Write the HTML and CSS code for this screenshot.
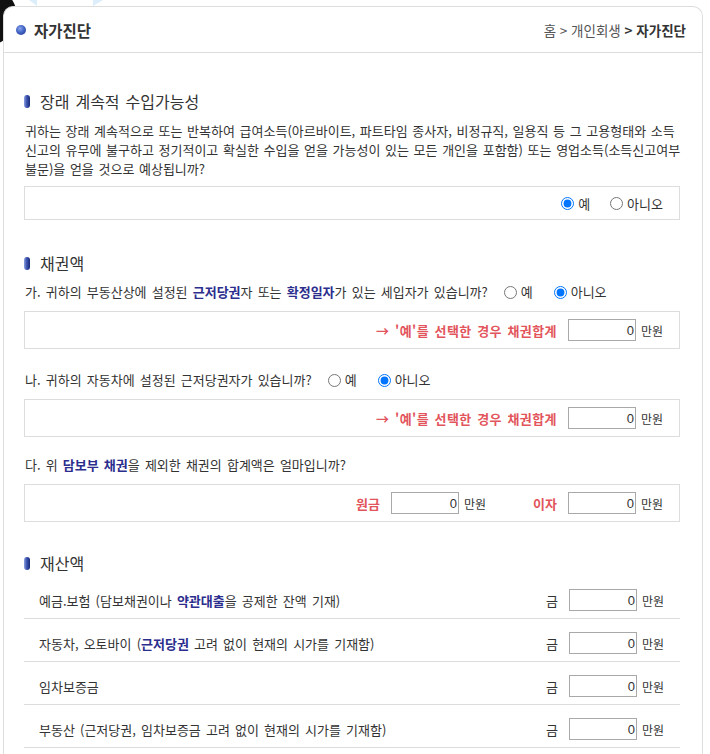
FILE: index.html
```html
<!DOCTYPE html>
<html lang="ko">
<head>
<meta charset="utf-8">
<title>자가진단</title>
<link rel="stylesheet" href="styles.css">
</head>
<body>
<div class="page">
  <div class="deco-blob"></div>
  <div class="deco-tab tab-a"></div>
  <div class="deco-tab tab-b"></div>
  <div class="panel">
    <div class="panel-head">
      <h2 class="title"><span class="ball"></span>자가진단</h2>
      <div class="crumb">홈 &gt; 개인회생 <b>&gt; 자가진단</b></div>
    </div>
    <div class="panel-body">
      <section class="sec sec-first">
        <h3 class="sec-title"><span class="pill"></span>장래 계속적 수입가능성</h3>
        <p class="desc">귀하는 장래 계속적으로 또는 반복하여 급여소득(아르바이트, 파트타임 종사자, 비정규직, 일용직 등 그 고용형태와 소득<br>신고의 유무에 불구하고 정기적이고 확실한 수입을 얻을 가능성이 있는 모든 개인을 포함함) 또는 영업소득(소득신고여부<br>불문)을 얻을 것으로 예상됩니까?</p>
        <div class="box box-radio">
          <label class="radio"><input type="radio" name="q1" checked>예</label>
          <label class="radio"><input type="radio" name="q1">아니오</label>
        </div>
      </section>

      <section class="sec">
        <h3 class="sec-title"><span class="pill"></span>채권액</h3>
        <div class="question">
          <span>가. 귀하의 부동산상에 설정된 <b class="em">근저당권</b>자 또는 <b class="em">확정일자</b>가 있는 세입자가 있습니까?</span>
          <span class="radios">
            <label class="radio"><input type="radio" name="q2">예</label>
            <label class="radio"><input type="radio" name="q2" checked>아니오</label>
          </span>
        </div>
        <div class="box box-amount">
          <span class="red">→ '예'를 선택한 경우 채권합계</span>
          <span class="amount"><input class="num" type="text" value="0"><span class="unit">만원</span></span>
        </div>

        <div class="question">
          <span>나. 귀하의 자동차에 설정된 근저당권자가 있습니까?</span>
          <span class="radios">
            <label class="radio"><input type="radio" name="q3">예</label>
            <label class="radio"><input type="radio" name="q3" checked>아니오</label>
          </span>
        </div>
        <div class="box box-amount">
          <span class="red">→ '예'를 선택한 경우 채권합계</span>
          <span class="amount"><input class="num" type="text" value="0"><span class="unit">만원</span></span>
        </div>

        <div class="question question-plain">
          <span>다. 위 <b class="em">담보부 채권</b>을 제외한 채권의 합계액은 얼마입니까?</span>
        </div>
        <div class="box box-amount">
          <span class="red red-short">원금</span>
          <span class="amount"><input class="num" type="text" value="0"><span class="unit">만원</span></span>
          <span class="red red-short red-gap">이자</span>
          <span class="amount"><input class="num" type="text" value="0"><span class="unit">만원</span></span>
        </div>
      </section>

      <section class="sec sec-last">
        <h3 class="sec-title"><span class="pill"></span>재산액</h3>
        <ul class="rows">
          <li class="row">
            <span class="row-label">예금.보험 (담보채권이나 <b class="em">약관대출</b>을 공제한 잔액 기재)</span>
            <span class="row-val"><span class="geum">금</span><input class="num" type="text" value="0"><span class="unit">만원</span></span>
          </li>
          <li class="row">
            <span class="row-label">자동차, 오토바이 (<b class="em">근저당권</b> 고려 없이 현재의 시가를 기재함)</span>
            <span class="row-val"><span class="geum">금</span><input class="num" type="text" value="0"><span class="unit">만원</span></span>
          </li>
          <li class="row">
            <span class="row-label">임차보증금</span>
            <span class="row-val"><span class="geum">금</span><input class="num" type="text" value="0"><span class="unit">만원</span></span>
          </li>
          <li class="row">
            <span class="row-label">부동산 (근저당권, 임차보증금 고려 없이 현재의 시가를 기재함)</span>
            <span class="row-val"><span class="geum">금</span><input class="num" type="text" value="0"><span class="unit">만원</span></span>
          </li>
        </ul>
      </section>
    </div>
  </div>
</div>
</body>
</html>
```
FILE: styles.css
```css
* { box-sizing: border-box; }
html, body { margin: 0; padding: 0; background: #fff; }
body {
  font-family: "Noto Sans CJK KR", "Noto Sans", sans-serif;
  font-size: 13px;
  color: #333;
  word-spacing: 1.5px;
}
.page {
  position: relative;
  padding: 6px 0 0 3px;
  width: 710px;
  height: 754px;
  overflow: hidden;
}
.deco-blob {
  position: absolute;
  left: -41px;
  top: -13px;
  width: 58px;
  height: 58px;
  border-radius: 50%;
  background: #111;
}
.deco-tab {
  position: absolute;
  top: 0;
  height: 6px;
  background: #dceefa;
}
.tab-a { left: 29px; width: 8px; clip-path: polygon(0 0, 100% 0, 100% 100%); }
.tab-b { left: 93px; width: 10px; clip-path: polygon(0 0, 100% 0, 0 100%); }

.panel {
  position: relative;
  width: 700px;
  border: 1px solid #ddd;
  border-bottom: 0;
  border-radius: 10px 10px 0 0;
  background: #fff;
  min-height: 760px;
}
.panel-head {
  height: 46px;
  border-bottom: 1px solid #ddd;
  display: flex;
  align-items: center;
  justify-content: space-between;
  padding: 0 16px 0 12px;
}
.title {
  margin: 0;
  display: flex;
  align-items: center;
  font-size: 15.5px;
  font-weight: bold;
  color: #333;
  line-height: 20px;
  word-spacing: 0;
}
.ball {
  width: 10px;
  height: 10px;
  border-radius: 50%;
  margin-right: 8px;
  background: radial-gradient(circle at 40% 35%, #8aa6ee 0%, #4466c4 45%, #1f3587 100%);
}
.crumb {
  font-size: 13.5px;
  color: #555;
  word-spacing: 0;
}
.crumb b { color: #333; }

.panel-body {
  padding: 0 22px 0 20px;
}
.sec { margin-top: 33px; }
.sec-first { margin-top: 38px; }
.sec-last { margin-top: 31px; }
.sec-title {
  margin: 0;
  display: flex;
  align-items: center;
  font-size: 16px;
  font-weight: normal;
  line-height: 20px;
  color: #333;
}
.pill {
  width: 6px;
  height: 13px;
  border-radius: 3px;
  margin-right: 10px;
  background: linear-gradient(90deg, #8ea2e0 0%, #3d55b0 45%, #182a78 100%);
}
.desc {
  margin: 10px 0 0 1px;
  line-height: 19px;
  white-space: nowrap;
  word-spacing: 1px;
}
.box {
  border: 1px solid #ddd;
  display: flex;
  align-items: center;
  justify-content: flex-end;
  padding: 0 16px;
}
.box-radio { height: 34px; margin-top: 8px; gap: 20px; }
.box-amount { height: 38px; margin-top: 9px; }

.radio {
  display: inline-flex;
  align-items: center;
  word-spacing: 0;
}
.radio input {
  margin: 0 4px 0 0;
  width: 13px;
  height: 13px;
}
.question {
  margin-top: 9px;
  line-height: 20px;
  display: flex;
  align-items: center;
  padding-left: 1px;
  white-space: nowrap;
}
.box-amount + .question { margin-top: 21px; }
.box-amount + .question-plain { margin-top: 18px; }
.radios {
  display: inline-flex;
  gap: 21px;
  margin-left: 16px;
}
.em { color: #2c2e8e; font-weight: bold; }
.red {
  color: #e2555c;
  font-weight: bold;
  margin-right: 11px;
  letter-spacing: 0.4px;
}
.red-short { letter-spacing: 0; }
.red-gap { margin-left: 47px; }
.amount, .row-val {
  display: inline-flex;
  align-items: center;
}
.num {
  width: 68px;
  height: 22px;
  border: 1px solid #a9a9a9;
  padding: 0 1px;
  text-align: right;
  font-family: "Liberation Sans", sans-serif;
  font-size: 13px;
  color: #333;
  background: #fff;
  outline: none;
}
.unit { margin-left: 5px; font-size: 12px; word-spacing: 0; }
.rows {
  list-style: none;
  margin: 3px 0 0;
  padding: 0;
}
.row {
  height: 43px;
  border-bottom: 1px solid #ddd;
  display: flex;
  align-items: center;
  justify-content: space-between;
  padding: 6px 16px 0 15px;
}
.geum { font-size: 13px; margin-right: 11px; }
```
